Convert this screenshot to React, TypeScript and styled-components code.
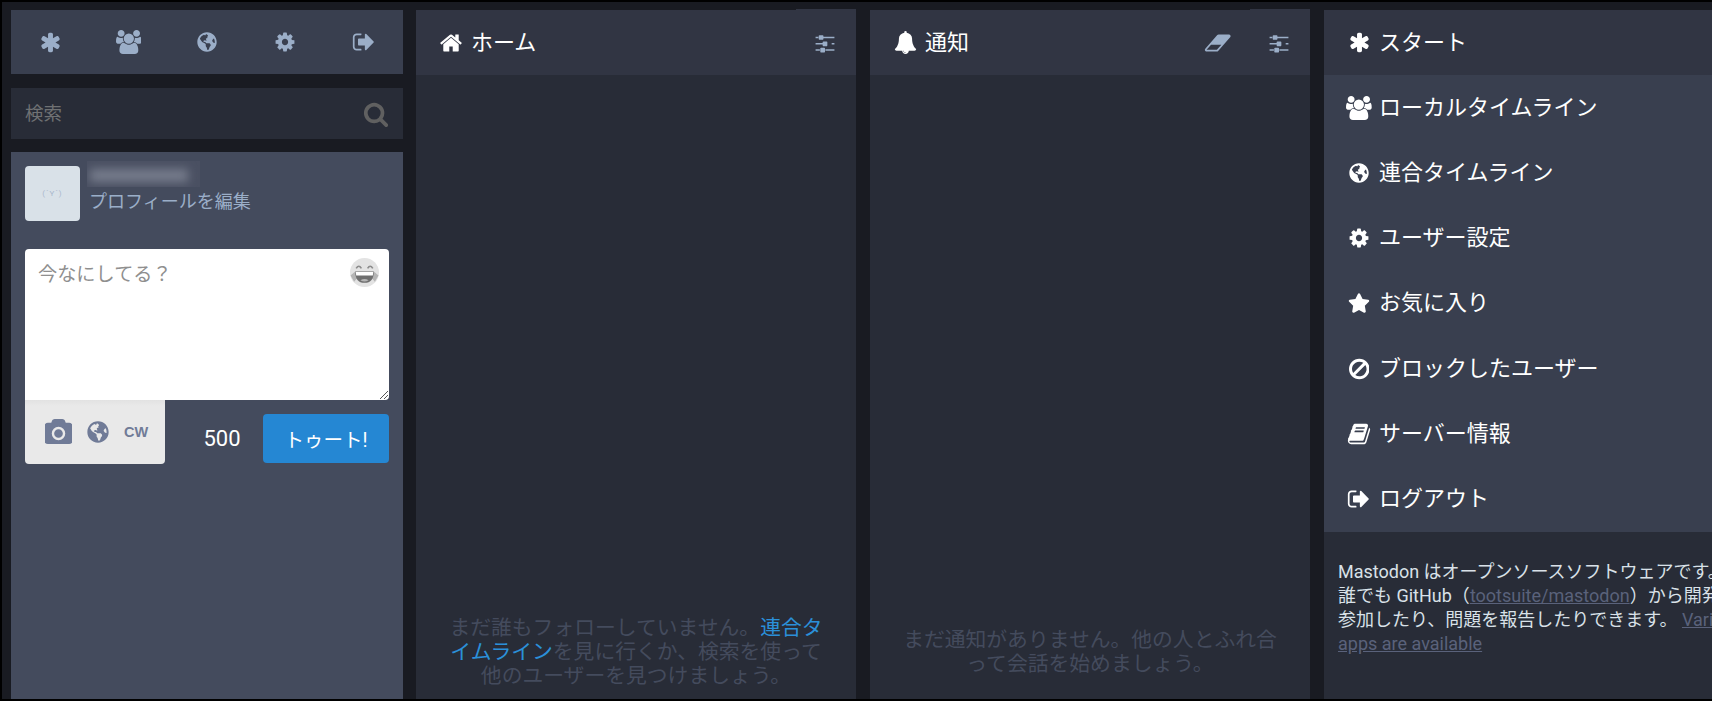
import styled, { createGlobalStyle } from "styled-components";
import { FaGlobeAmericas, FaStar } from "react-icons/fa";

type GlyphType = {
  box: number;
  d: string;
};

// font awesome 4 shapes, the package only ships the newer ones
const ICONS: Record<string, GlyphType> = {
  asterisk: {
    box: 1792,
    d: "M1546 1050q46 26 59.5 77.5t-12.5 97.5l-64 110q-26 46-77.5 59.5t-97.5-12.5l-266-153v307q0 52-38 90t-90 38h-128q-52 0-90-38t-38-90v-307l-266 153q-46 26-97.5 12.5t-77.5-59.5l-64-110q-26-46-12.5-97.5t59.5-77.5l266-154-266-154q-46-26-59.5-77.5t12.5-97.5l64-110q26-46 77.5-59.5t97.5 12.5l266 153v-307q0-52 38-90t90-38h128q52 0 90 38t38 90v307l266-153q46-26 97.5-12.5t77.5 59.5l64 110q26 46 12.5 97.5t-59.5 77.5l-266 154z",
  },
  users: {
    box: 1920,
    d: "M593 896q-162 5-265 128h-134q-82 0-138-40.5t-56-118.5q0-353 124-353 6 0 43.5 21t97.5 42.5 119 21.5q67 0 133-23-5 37-5 66 0 139 81 256zm1071 637q0 120-73 189.5t-194 69.5h-874q-121 0-194-69.5t-73-189.5q0-53 3.5-103.5t14-109 26.5-108.5 43-97.5 62-81 85.5-53.5 111.5-20q10 0 43 21.5t73 48 107 48 135 21.5 135-21.5 107-48 73-48 43-21.5q61 0 111.5 20t85.5 53.5 62 81 43 97.5 26.5 108.5 14 109 3.5 103.5zm-1024-1277q0 106-75 181t-181 75-181-75-75-181 75-181 181-75 181 75 75 181zm704 384q0 159-112.5 271.5t-271.5 112.5-271.5-112.5-112.5-271.5 112.5-271.5 271.5-112.5 271.5 112.5 112.5 271.5zm576 225q0 78-56 118.5t-138 40.5h-134q-103-123-265-128 81-117 81-256 0-29-5-66 66 23 133 23 59 0 119-21.5t97.5-42.5 43.5-21q124 0 124 353zm-128-609q0 106-75 181t-181 75-181-75-75-181 75-181 181-75 181 75 75 181z",
  },
  cog: {
    box: 1792,
    d: "M1152 896q0-106-75-181t-181-75-181 75-75 181 75 181 181 75 181-75 75-181zm512-109v222q0 12-8 23t-20 13l-185 28q-19 54-39 91 35 50 107 138 10 12 10 25t-9 23q-27 37-99 108t-94 71q-12 0-26-9l-138-108q-44 23-91 38-16 136-29 186-7 28-36 28h-222q-14 0-24.5-8.5t-11.5-21.5l-28-184q-49-16-90-37l-141 107q-10 9-25 9-14 0-25-11-126-114-165-168-7-10-7-23 0-12 8-23 15-21 51-66.5t54-70.5q-27-50-41-99l-183-27q-13-2-21-12.5t-8-23.5v-222q0-12 8-23t19-13l186-28q14-46 39-92-40-57-107-138-10-12-10-24 0-10 9-23 26-36 98.5-107.5t94.5-71.5q13 0 26 10l138 107q44-23 91-38 16-136 29-186 7-28 36-28h222q14 0 24.5 8.5t11.5 21.5l28 184q49 16 90 37l142-107q9-9 24-9 13 0 25 10 129 119 165 170 7 8 7 22 0 12-8 23-15 21-51 66.5t-54 70.5q26 50 41 98l183 28q13 2 21 12.5t8 23.5z",
  },
  signOut: {
    box: 1792,
    d: "M704 1440q0 4 1 20t.5 26.5-3 23.5-10 19.5-20.5 6.5h-320q-119 0-203.5-84.5t-84.5-203.5v-704q0-119 84.5-203.5t203.5-84.5h320q13 0 22.5 9.5t9.5 22.5q0 4 1 20t.5 26.5-3 23.5-10 19.5-20.5 6.5h-320q-66 0-113 47t-47 113v704q0 66 47 113t113 47h288 11 13t11.5 1 11.5 3 8 5.5 7 9 2 13.5zm928-544q0 26-19 45l-544 544q-19 19-45 19t-45-19-19-45v-288h-448q-26 0-45-19t-19-45v-384q0-26 19-45t45-19h448v-288q0-26 19-45t45-19 45 19l544 544q19 19 19 45z",
  },
  search: {
    box: 1792,
    d: "M1216 832q0-185-131.5-316.5t-316.5-131.5-316.5 131.5-131.5 316.5 131.5 316.5 316.5 131.5 316.5-131.5 131.5-316.5zm512 832q0 52-38 90t-90 38q-54 0-90-38l-343-342q-179 124-399 124-143 0-273.5-55.5t-225-150-150-225-55.5-273.5 55.5-273.5 150-225 225-150 273.5-55.5 273.5 55.5 225 150 150 225 55.5 273.5q0 220-124 399l343 343q37 37 37 90z",
  },
  home: {
    box: 1792,
    d: "M1472 992v480q0 26-19 45t-45 19h-384v-384h-256v384h-384q-26 0-45-19t-19-45v-480q0-1 .5-3t.5-3l575-474 575 474q1 2 1 6zm223-69l-62 74q-8 9-21 11h-3q-13 0-21-7l-692-577-692 577q-12 8-24 7-13-2-21-11l-62-74q-8-10-7-23.5t11-21.5l719-599q32-26 76-26t76 26l244 204v-195q0-14 9-23t23-9h192q14 0 23 9t9 23v408l219 182q10 8 11 21.5t-7 23.5z",
  },
  bell: {
    box: 1792,
    d: "M912 1696q0-16-16-16-59 0-101.5-42.5t-42.5-101.5q0-16-16-16t-16 16q0 73 51.5 124.5t124.5 51.5q16 0 16-16zm816-288q0 52-38 90t-90 38h-448q0 106-75 181t-181 75-181-75-75-181h-448q-52 0-90-38t-38-90q50-42 91-88t85-119.5 74.5-158.5 50-206 19.5-260q0-152 117-282.5t307-158.5q-8-19-8-39 0-40 28-68t68-28 68 28 28 68q0 20-8 39 190 28 307 158.5t117 282.5q0 139 19.5 260t50 206 74.5 158.5 85 119.5 91 88z",
  },
  sliders: {
    box: 1792,
    d: "M480 1408v128h-352v-128h352zm352-128q26 0 45 19t19 45v256q0 26-19 45t-45 19h-256q-26 0-45-19t-19-45v-256q0-26 19-45t45-19h256zm160-384v128h-864v-128h864zm-640-512v128h-224v-128h224zm1312 1024v128h-736v-128h736zm-960-1152q26 0 45 19t19 45v256q0 26-19 45t-45 19h-256q-26 0-45-19t-19-45v-256q0-26 19-45t45-19h256zm320 512q26 0 45 19t19 45v256q0 26-19 45t-45 19h-256q-26 0-45-19t-19-45v-256q0-26 19-45t45-19h256zm640-384v128h-1184v-128h1184zm0 512v128h-224v-128h224z",
  },
  eraser: {
    box: 2048,
    d: "M960 1408l336-384h-768l-336 384h768zm1013-1077q15 34 9.5 71.5t-30.5 65.5l-896 1024q-38 44-96 44h-768q-38 0-69.5-20.5t-47.5-54.5q-15-34-9.5-71.5t30.5-65.5l896-1024q38-44 96-44h768q38 0 70 20.5t47 54.5z",
  },
  book: {
    box: 1792,
    d: "M1703 478q40 57 18 129l-275 906q-19 64-76.5 107.5t-122.5 43.5h-923q-77 0-148.5-53.5t-99.5-131.5q-24-67-2-127 0-4 3-27t4-37q1-8-3-21.5t-3-19.5q2-11 8-21t16.5-23.5 16.5-23.5q23-38 45-91.5t30-91.5q3-10 .5-30t-.5-28q3-11 17-28t17-23q21-36 42-92t25-90q1-9-2.5-32t.5-28q4-13 22-30.5t22-22.5q19-26 42.5-84.5t27.5-96.5q1-8-3-25.5t-2-26.5q2-8 9-18t18-23 17-21q8-12 16.5-30.5t15-35 16-36 19.5-32 26.5-23.5 36-11.5 47.5 5.5l-1 3q38-9 51-9h761q74 0 114 56t18 130l-274 906q-36 119-71.5 153.5t-128.5 34.5h-869q-27 0-38 15-11 16-1 43 24 70 144 70h923q29 0 56-15.5t35-41.5l300-987q7-22 5-57 38 15 59 43zm-1064 2q-4 13 2 22.5t20 9.5h608q13 0 25.5-9.5t16.5-22.5l21-64q4-13-2-22.5t-20-9.5h-608q-13 0-25.5 9.5t-16.5 22.5zm-83 256q-4 13 2 22.5t20 9.5h608q13 0 25.5-9.5t16.5-22.5l21-64q4-13-2-22.5t-20-9.5h-608q-13 0-25.5 9.5t-16.5 22.5z",
  },
  camera: {
    box: 1792,
    d: "M896 672q119 0 203.5 84.5t84.5 203.5-84.5 203.5-203.5 84.5-203.5-84.5-84.5-203.5 84.5-203.5 203.5-84.5zm704-416q106 0 181 75t75 181v896q0 106-75 181t-181 75h-1408q-106 0-181-75t-75-181v-896q0-106 75-181t181-75h224l51-136q19-49 69.5-84.5t103.5-35.5h512q53 0 103.5 35.5t69.5 84.5l51 136h224zm-704 1152q185 0 316.5-131.5t131.5-316.5-131.5-316.5-316.5-131.5-316.5 131.5-131.5 316.5 131.5 316.5 316.5 131.5z",
  },
  ban: {
    box: 1536,
    d: "M1312 893q0-161-87-295l-754 753q137 89 297 89 111 0 211.5-43.5t173.5-116.5 116-174.5 43-212.5zm-999 299l755-754q-135-91-300-91-148 0-273 73t-198 199-73 274q0 162 89 299zm1223-299q0 157-61 300t-163.5 246-245 164-298.5 61-298.5-61-245-164-163.5-246-61-300 61-299.5 163.5-245.5 245-164 298.5-61 298.5 61 245 164 163.5 245.5 61 299.5z",
  },
};

const GlobalStyle = createGlobalStyle`
  html, body {
    margin: 0;
    padding: 0;
    background: #000;
    overflow: hidden;
  }
  * {
    box-sizing: border-box;
  }
`;

const Page = styled.div`
  display: flex;
  width: 1712px;
  height: 701px;
  padding: 8px 0 0 9px;
  overflow: hidden;
  background: #191b22;
  border-style: solid;
  border-color: #000;
  border-width: 2px 0 2px 2px;
  font-family: Roboto, "Noto Sans CJK JP", sans-serif;
`;

const Drawer = styled.section`
  display: flex;
  flex: 0 0 392px;
  flex-direction: column;
  margin-right: 13px;
`;

const DrawerNav = styled.nav`
  display: flex;
  flex: 0 0 64px;
  background: #393f4f;
  color: #9baec8;
`;

const DrawerNavItem = styled.div`
  display: flex;
  flex: 1;
  align-items: center;
  justify-content: center;
`;

const SearchBox = styled.div`
  display: flex;
  flex: 0 0 51px;
  align-items: center;
  justify-content: space-between;
  margin-top: 14px;
  padding: 0 14px;
  background: #282c37;
  color: #606060;
  font-size: 18.5px;
`;

const SearchLabel = styled.span`
  margin-bottom: 4px;
  color: #6f7173;
`;

const ComposePanel = styled.div`
  flex: 1;
  margin-top: 13px;
  padding: 14px;
  background: #444b5d;
`;

const Profile = styled.div`
  display: flex;
  height: 83px;
`;

const Avatar = styled.div`
  display: flex;
  flex: 0 0 55px;
  align-items: center;
  justify-content: center;
  height: 55px;
  border-radius: 4px;
  background: #d9e1e8;
  color: #a9b8cc;
  font-size: 8px;
  letter-spacing: 1px;
`;

const ProfileInfo = styled.div`
  display: flex;
  flex-direction: column;
  margin: -5px 0 0 7px;
`;

const BlurredName = styled.div`
  display: flex;
  align-items: center;
  width: 113px;
  height: 26px;
  padding: 2px 12px 0 3px;
  overflow: hidden;
  background: #4a5062;
`;

const BlurredBar = styled.div`
  width: 100%;
  height: 13px;
  background: #767c8c;
  filter: blur(5px);
`;

const EditLink = styled.div`
  margin: 3px 0 0 2px;
  color: #9baec8;
  font-size: 18px;
  line-height: 24px;
`;

const TextArea = styled.div`
  position: relative;
  height: 151px;
  padding: 13px 13px;
  border-radius: 4px 4px 4px 0;
  background: #fff;
  color: #8f8f8f;
  font-size: 19.2px;
  line-height: 26px;
`;

const EmojiButton = styled.svg`
  position: absolute;
  top: 9px;
  right: 10px;
  width: 29px;
  height: 29px;
`;

const ResizeGrip = styled.svg`
  position: absolute;
  right: 1px;
  bottom: 1px;
  width: 8px;
  height: 8px;
`;

const ComposeFooter = styled.div`
  display: flex;
  align-items: flex-start;
`;

const ComposeTools = styled.div`
  display: flex;
  flex: 0 0 140px;
  align-items: center;
  gap: 15px;
  height: 64px;
  padding: 0 0 0 20px;
  border-radius: 0 0 4px 4px;
  background: linear-gradient(#e2e2e2, #e9e9e9 6px);
  color: #707b97;
`;

const CwLabel = styled.span`
  font-family: "Liberation Sans", sans-serif;
  font-size: 14.5px;
  font-weight: 700;
`;

const CharCount = styled.span`
  flex: 1;
  margin-top: 25px;
  padding-left: 16px;
  color: #fff;
  font-size: 22px;
  line-height: 28px;
  text-align: center;
`;

const TootButton = styled.button`
  flex: 0 0 126px;
  height: 49px;
  margin-top: 14px;
  padding: 0;
  border: 0;
  border-radius: 4px;
  background: #2587d3;
  color: #fff;
  font-family: inherit;
  font-size: 19.5px;
`;

const Column = styled.section`
  display: flex;
  flex: 0 0 440px;
  flex-direction: column;
  margin-right: 14px;
  background: #282c37;
`;

const ColumnHeader = styled.header<{ $dark?: boolean }>`
  position: relative;
  display: flex;
  flex: 0 0 65px;
  align-items: center;
  padding: 0 20px 0 21px;
  background: #313543;
  color: #fff;
  font-size: 22px;

  ${props =>
    props.$dark
      ? ""
      : `&::before {
    content: "";
    position: absolute;
    top: -1px;
    right: 0;
    width: 60px;
    height: 1px;
    background: #313543;
  }`}
`;

const RowIcon = styled.span`
  display: flex;
  flex: 0 0 28px;
  align-items: center;
  justify-content: center;
  margin-right: 6px;
`;

const RowLabel = styled.span`
  margin-bottom: 6px;
`;

const HeaderActions = styled.div`
  display: flex;
  align-items: center;
  gap: 37px;
  margin-left: auto;
  color: #9baec8;
`;

const EmptyBody = styled.div<{ $bottom: number }>`
  display: flex;
  flex: 1;
  align-items: flex-end;
  padding: 0 28px ${props => props.$bottom}px;
`;

const EmptyText = styled.div`
  width: 100%;
  color: #444b5d;
  font-size: 20.8px;
  line-height: 24px;
  text-align: center;
`;

const BlueLink = styled.span`
  color: #2b90d9;
`;

const MenuRow = styled.div`
  display: flex;
  flex: 0 0 65.25px;
  align-items: center;
  padding-left: 21px;
  background: #393f4f;
  color: #fff;
  font-size: 22px;
`;

const AboutText = styled.div`
  flex: 1;
  padding: 28px 0 0 14px;
  color: #d9e1e8;
  font-size: 18px;
  line-height: 24px;
  white-space: nowrap;
`;

const AboutLink = styled.span`
  color: #5a627b;
  text-decoration: underline;
`;

function Glyph({ name, size }: { name: string; size: number }) {
  const icon = ICONS[name];
  return (
    <svg width={size * (icon.box / 1792)} height={size} viewBox={`0 0 ${icon.box} 1792`} fill="currentColor">
      <path d={icon.d} />
    </svg>
  );
}

function LaughEmoji() {
  return (
    <EmojiButton viewBox="0 0 28 28">
      <circle cx="14" cy="14" r="14" fill="#e3e3e3" />
      <path d="M0.5 17 L5 13 L8 18 L4 23 Z M27.5 17 L23 13 L20 18 L24 23 Z" fill="#b5b5b5" />
      <path d="M6 10 Q8.5 6 11 10 M17 10 Q19.5 6 22 10" fill="none" stroke="#8c8c8c" strokeWidth="1.6" />
      <path d="M5 13 H23 Q23 24 14 24 Q5 24 5 13 Z" fill="#6f6f6f" />
      <path d="M5.5 13.5 H22.5 L22 17 H6 Z" fill="#fff" />
      <path d="M10 21.5 Q14 19 18 21.5 Q14 24 10 21.5 Z" fill="#b5b5b5" />
    </EmojiButton>
  );
}

function App() {
  return (
    <>
      <GlobalStyle />
      <Page>
        <Drawer>
          <DrawerNav>
            <DrawerNavItem>
              <Glyph name="asterisk" size={23} />
            </DrawerNavItem>
            <DrawerNavItem>
              <Glyph name="users" size={24} />
            </DrawerNavItem>
            <DrawerNavItem>
              <FaGlobeAmericas size={20} />
            </DrawerNavItem>
            <DrawerNavItem>
              <Glyph name="cog" size={22} />
            </DrawerNavItem>
            <DrawerNavItem>
              <Glyph name="signOut" size={24} />
            </DrawerNavItem>
          </DrawerNav>
          <SearchBox>
            <SearchLabel>検索</SearchLabel>
            <Glyph name="search" size={26} />
          </SearchBox>
          <ComposePanel>
            <Profile>
              <Avatar>(´Y`)</Avatar>
              <ProfileInfo>
                <BlurredName>
                  <BlurredBar />
                </BlurredName>
                <EditLink>プロフィールを編集</EditLink>
              </ProfileInfo>
            </Profile>
            <TextArea>
              今なにしてる？
              <LaughEmoji />
              <ResizeGrip viewBox="0 0 8 8">
                <path d="M0 8 L8 0 M4 8 L8 4" stroke="#555" strokeWidth="1" />
              </ResizeGrip>
            </TextArea>
            <ComposeFooter>
              <ComposeTools>
                <Glyph name="camera" size={27} />
                <FaGlobeAmericas size={22} />
                <CwLabel>CW</CwLabel>
              </ComposeTools>
              <CharCount>500</CharCount>
              <TootButton>トゥート!</TootButton>
            </ComposeFooter>
          </ComposePanel>
        </Drawer>

        <Column>
          <ColumnHeader>
            <RowIcon>
              <Glyph name="home" size={24} />
            </RowIcon>
            <RowLabel>ホーム</RowLabel>
            <HeaderActions>
              <Glyph name="sliders" size={22} />
            </HeaderActions>
          </ColumnHeader>
          <EmptyBody $bottom={11}>
            <EmptyText>
              まだ誰もフォローしていません。<BlueLink>連合タイムライン</BlueLink>を見に行くか、検索を使って他のユーザーを見つけましょう。
            </EmptyText>
          </EmptyBody>
        </Column>

        <Column>
          <ColumnHeader>
            <RowIcon>
              <Glyph name="bell" size={23} />
            </RowIcon>
            <RowLabel>通知</RowLabel>
            <HeaderActions>
              <Glyph name="eraser" size={24} />
              <Glyph name="sliders" size={22} />
            </HeaderActions>
          </ColumnHeader>
          <EmptyBody $bottom={23}>
            <EmptyText>まだ通知がありません。他の人とふれ合って会話を始めましょう。</EmptyText>
          </EmptyBody>
        </Column>

        <Column>
          <ColumnHeader $dark>
            <RowIcon>
              <Glyph name="asterisk" size={23} />
            </RowIcon>
            <RowLabel>スタート</RowLabel>
          </ColumnHeader>
          <MenuRow>
            <RowIcon>
              <Glyph name="users" size={24} />
            </RowIcon>
            <RowLabel>ローカルタイムライン</RowLabel>
          </MenuRow>
          <MenuRow>
            <RowIcon>
              <FaGlobeAmericas size={20} />
            </RowIcon>
            <RowLabel>連合タイムライン</RowLabel>
          </MenuRow>
          <MenuRow>
            <RowIcon>
              <Glyph name="cog" size={22} />
            </RowIcon>
            <RowLabel>ユーザー設定</RowLabel>
          </MenuRow>
          <MenuRow>
            <RowIcon>
              <FaStar size={22} />
            </RowIcon>
            <RowLabel>お気に入り</RowLabel>
          </MenuRow>
          <MenuRow>
            <RowIcon>
              <Glyph name="ban" size={24} />
            </RowIcon>
            <RowLabel>ブロックしたユーザー</RowLabel>
          </MenuRow>
          <MenuRow>
            <RowIcon>
              <Glyph name="book" size={24} />
            </RowIcon>
            <RowLabel>サーバー情報</RowLabel>
          </MenuRow>
          <MenuRow>
            <RowIcon>
              <Glyph name="signOut" size={24} />
            </RowIcon>
            <RowLabel>ログアウト</RowLabel>
          </MenuRow>
          <AboutText>
            Mastodon はオープンソースソフトウェアです。
            <br />
            誰でも GitHub（<AboutLink>tootsuite/mastodon</AboutLink>）から開発に
            <br />
            参加したり、問題を報告したりできます。 <AboutLink>Various mobile</AboutLink>
            <br />
            <AboutLink>apps are available</AboutLink>
          </AboutText>
        </Column>
      </Page>
    </>
  );
}

export default App;
